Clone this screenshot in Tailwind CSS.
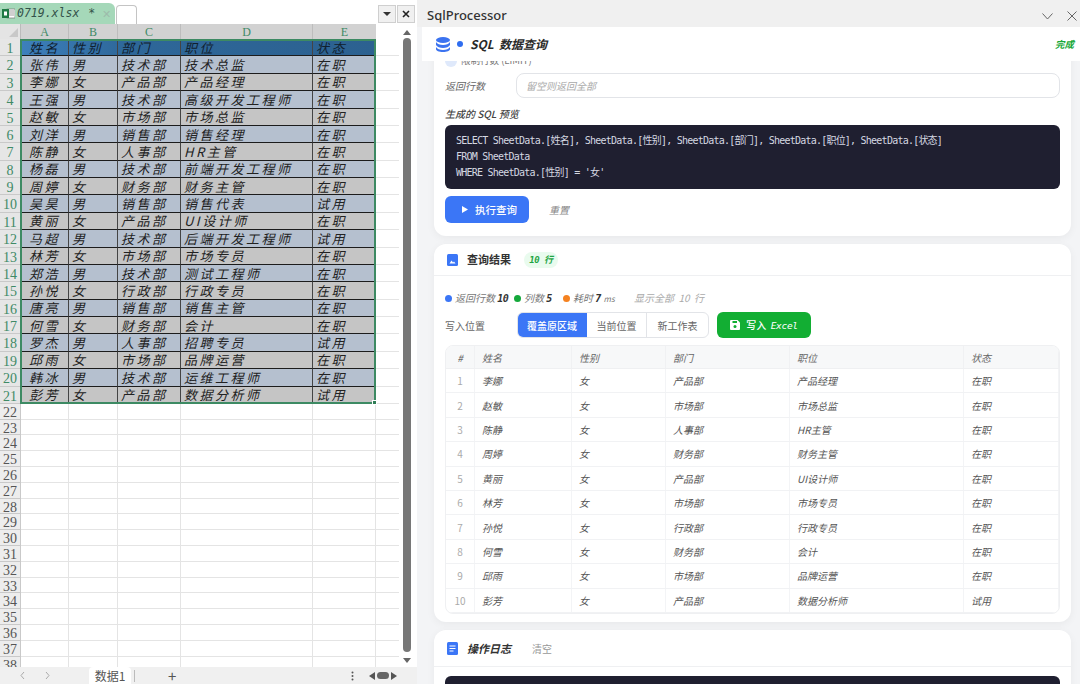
<!DOCTYPE html>
<html lang="zh-CN">
<head>
  <meta charset="UTF-8" />
  <title>0719.xlsx - SqlProcessor</title>
  <script src="https://cdn.jsdelivr.net/npm/@tailwindcss/browser@4"></script>
</head>
<body class="w-[1080px] h-[684px] overflow-hidden flex bg-white text-gray-800 font-['Noto_Sans_CJK_SC','Noto_Sans',sans-serif]">

<!-- Spreadsheet -->
<section class="w-[417px] h-full flex flex-col shrink-0 bg-white">
  <!-- File tabs -->
  <div class="h-6 flex items-end relative shrink-0">
    <div class="w-[115px] h-[21px] bg-[#a5d8b9] rounded-tr-md flex items-center pl-[2px]">
      <svg class="w-[13px] h-[13px] shrink-0" viewBox="0 0 13 13"><rect x="5" y="2" width="8" height="9" fill="#fff" stroke="#777" stroke-width=".7"/><path d="M7 4h5M7 6h5M7 8h5" stroke="#777" stroke-width=".7"/><rect x="0" y="2" width="7" height="9" fill="#1f7a45"/><rect x="2" y="4.500" width="3" height="4" fill="#fff"/></svg>
      <span class="ml-[2px] font-['DejaVu_Sans_Mono',monospace] italic text-[11.500px] text-[#33524a]">0719.xlsx</span>
      <span class="ml-[9px] font-['DejaVu_Sans_Mono',monospace] text-[11.500px] text-[#33524a]">*</span>
      <span class="text-[#9dbbab] text-[11px] ml-[7px]">✕</span>
    </div>
    <div class="w-[21px] h-[19px] ml-[1px] bg-white border border-b-0 border-[#c4c4c4] rounded-t-[4px]"></div>
    <div class="absolute right-[2px] top-[5px] flex gap-[1px]">
      <div class="w-[18px] h-[18px] bg-[#f0f0f0] border border-[#cfcfcf] flex items-center justify-center">
        <svg class="w-2 h-1" viewBox="0 0 8 4"><path d="M0 0h8L4 4z" fill="#333"/></svg>
      </div>
      <div class="w-[18px] h-[18px] bg-[#f0f0f0] border border-[#cfcfcf] flex items-center justify-center">
        <svg class="w-2 h-2" viewBox="0 0 8 8"><path d="M1 1l6 6M7 1L1 7" stroke="#222" stroke-width="1.6"/></svg>
      </div>
    </div>
  </div>

  <div class="flex-1 flex min-h-0">
    <div class="w-[399px] relative overflow-hidden">
      <!-- Column letters -->
      <div class="h-[15px] flex bg-[#f1f1f1] font-['Liberation_Serif',serif] text-[12px] leading-[16px] text-[#3f8a66] text-center">
        <div class="w-[21px] bg-[#e4e4e4] border-r border-[#bbb] relative">
          <svg class="absolute right-[2px] bottom-[2px] w-[9px] h-[9px]" viewBox="0 0 9 9"><path d="M9 0v9H0z" fill="#c8c8c8"/></svg>
        </div>
        <div class="w-[48px] bg-[#d2d2d2] border-r border-[#bdbdbd]">A</div>
        <div class="w-[49px] bg-[#d2d2d2] border-r border-[#bdbdbd]">B</div>
        <div class="w-[63px] bg-[#d2d2d2] border-r border-[#bdbdbd]">C</div>
        <div class="w-[132px] bg-[#d2d2d2] border-r border-[#bdbdbd]">D</div>
        <div class="w-[63px] bg-[#d2d2d2]">E</div>
        <div class="flex-1 bg-white"></div>
      </div>
      <div id="sheet"></div>
      <!-- Selection frame -->
      <div class="absolute left-[20px] top-[15px] w-[356px] h-[365px] border-2 border-[#3d8a63] pointer-events-none">
        <div class="absolute -right-[3px] -bottom-[3px] w-[3px] h-[3px] bg-[#2f7d55] border border-white box-content"></div>
      </div>
    </div>
    <!-- Vertical scrollbar -->
    <div class="w-[18px] flex flex-col items-center relative">
      <svg class="w-2 h-[5px] mt-[6px] ml-[-2px]" viewBox="0 0 8 5"><path d="M4 0l4 5H0z" fill="#666"/></svg>
      <div class="w-2 h-[614px] mt-[3px] ml-[-2px] bg-[#777] rounded-full"></div>
      <svg class="w-2 h-[5px] mt-[6px] ml-[-2px]" viewBox="0 0 8 5"><path d="M0 0h8L4 5z" fill="#666"/></svg>
    </div>
  </div>

  <!-- Sheet tabs -->
  <div class="h-[17px] shrink-0 flex items-center bg-[#f0f0f0] text-[#888] relative">
    <svg class="w-[7px] h-[9px] ml-[19px]" viewBox="0 0 7 9"><path d="M5 1L2 4.500l3 3.500" fill="none" stroke="#aaa"/></svg>
    <svg class="w-[7px] h-[9px] ml-[18px]" viewBox="0 0 7 9"><path d="M2 1l3 3.500L2 8" fill="none" stroke="#aaa"/></svg>
    <div class="w-[42px] h-full ml-[38px] bg-white rounded-t-[4px] text-[12px] leading-[17px] text-[#555] text-center">数据1</div>
    <div class="w-px h-[12px] ml-[3px] bg-[#bbb]"></div>
    <span class="ml-[33px] text-[15px] leading-[15px] text-[#555]">+</span>
    <div class="absolute right-[2px] top-0 h-full flex items-center">
      <svg class="w-[3px] h-[10px] mr-[15px]" viewBox="0 0 3 10"><circle cx="1.500" cy="1.500" r="1" fill="#555"/><circle cx="1.500" cy="5" r="1" fill="#555"/><circle cx="1.500" cy="8.500" r="1" fill="#555"/></svg>
      <svg class="w-[6px] h-2" viewBox="0 0 6 8"><path d="M6 0v8L0 4z" fill="#555"/></svg>
      <div class="w-[12px] h-[7px] mx-[2px] rounded-full bg-[#666]"></div>
      <svg class="w-[6px] h-2 mr-[18px]" viewBox="0 0 6 8"><path d="M0 0v8l6-4z" fill="#555"/></svg>
    </div>
  </div>
</section>

<!-- SqlProcessor task pane -->
<section class="flex-1 h-full flex flex-col bg-[#f3f4f6] min-w-0">
  <div class="h-[27px] shrink-0 bg-[#f0f0f0] flex items-center justify-between pt-[5px] pl-[10px] pr-[3px]">
    <span class="text-[13px] font-medium text-[#333] font-['Noto_Sans',sans-serif]">SqlProcessor</span>
    <div class="flex items-center gap-[14px]">
      <svg class="w-[11px] h-[7px]" viewBox="0 0 11 7"><path d="M.5.500l5 5.500 5-5.500" fill="none" stroke="#666"/></svg>
      <svg class="w-[10px] h-[10px]" viewBox="0 0 10 10"><path d="M.5.500l9 9M9.500.500l-9 9" fill="none" stroke="#666"/></svg>
    </div>
  </div>

  <div class="h-[34px] shrink-0 ml-[5px] bg-white flex items-center pl-[14px] pr-[6px] relative z-10">
    <svg class="w-[14px] h-[15px]" viewBox="0 0 14 15"><ellipse cx="7" cy="3" rx="7" ry="3" fill="#3b73f0"/><path d="M0 5c1 2 4 3 7 3s6-1 7-3v3c-1 2-4 3-7 3S1 10 0 8z" fill="#3b73f0"/><path d="M0 10c1 2 4 3 7 3s6-1 7-3v2c0 2-3 3-7 3s-7-1-7-3z" fill="#3b73f0"/></svg>
    <span class="w-[6px] h-[6px] ml-[7px] rounded-full bg-[#2f6df0]"></span>
    <span class="ml-[7px] text-[12px] font-bold italic text-[#2a2a2a] whitespace-pre">SQL  数据查询</span>
    <span class="ml-auto text-[9.500px] font-bold italic text-[#18a838]">完成</span>
  </div>

  <div class="flex-1 min-h-0 overflow-hidden pl-[17px] pr-[9px]">
    <!-- Query card -->
    <div class="-mt-[8px] h-[183px] bg-white rounded-b-xl shadow-[0_2px_8px_rgba(0,0,0,0.05)] px-[11px] flex flex-col">
      <div class="h-[15px] flex items-center gap-[4px] shrink-0">
        <span class="w-[12px] h-[12px] rounded-full bg-[#dfe9fb]"></span>
        <span class="text-[9.500px] text-[#777]">限制行数 (LIMIT)</span>
      </div>
      <div class="flex items-center mt-[5px] shrink-0">
        <span class="w-[71px] text-[10px] italic text-[#666]">返回行数</span>
        <div class="flex-1 h-[25px] border border-[#e2e4e8] rounded-lg flex items-center px-[9px] text-[10px] italic text-[#aaa]">留空则返回全部</div>
      </div>
      <div class="mt-[9px] text-[10px] font-medium italic text-[#444] leading-[13px] whitespace-pre shrink-0">生成的 SQL 预览</div>
      <div class="mt-[5px] h-[64px] shrink-0 bg-[#1f1f30] rounded-md px-[11px] py-[8px] font-['DejaVu_Sans_Mono','Noto_Sans_CJK_SC',monospace] text-[10px] tracking-[-0.770px] leading-[16px] text-[#d5d8e2] whitespace-pre">SELECT SheetData.[姓名], SheetData.[性别], SheetData.[部门], SheetData.[职位], SheetData.[状态]
FROM SheetData
WHERE SheetData.[性别] = '女'</div>
      <div class="mt-[7px] flex items-center shrink-0">
        <div class="w-[84px] h-[27px] bg-[#3b76f6] rounded-md flex items-center pl-[17px] gap-[7px] text-white text-[10.500px] font-medium">
          <svg class="w-[6px] h-[7px]" viewBox="0 0 6 7"><path d="M0 0l6 3.500L0 7z" fill="#fff"/></svg>
          执行查询
        </div>
        <span class="ml-[20px] text-[10px] italic text-[#888]">重置</span>
      </div>
    </div>

    <!-- Results card -->
    <div class="mt-[8px] h-[378px] bg-white rounded-xl shadow-[0_2px_8px_rgba(0,0,0,0.05)] flex flex-col">
      <div class="h-[32px] shrink-0 border-b border-[#eff0f2] flex items-center px-[13px]">
        <svg class="w-[11px] h-[12px]" viewBox="0 0 11 12"><rect width="11" height="12" rx="1.500" fill="#3b76f6"/><path d="M2.500 9.500l2-3 1.500 2 1-1 1.500 2z" fill="#fff"/></svg>
        <span class="ml-[9px] text-[11px] font-bold text-[#333]">查询结果</span>
        <span class="ml-[13px] w-[34px] h-[16px] rounded-full bg-[#e9fbee] text-[#1fa544] text-[9px] font-bold italic leading-[16px] text-center font-['DejaVu_Sans_Mono','Noto_Sans_CJK_SC',monospace] tracking-[-0.500px]">10 行</span>
      </div>
      <div class="h-[36px] shrink-0 px-[11px] pt-[15px] flex items-start text-[10px] leading-[14px] italic text-[#777]">
        <span class="w-[7px] h-[7px] mt-[4px] rounded-full bg-[#3b76f6]"></span>
        <span class="ml-[3px] w-[59px]">返回行数 <b class="text-[#333] font-['DejaVu_Sans_Mono',monospace] tracking-[-0.500px]">10</b></span>
        <span class="w-[7px] h-[7px] mt-[4px] rounded-full bg-[#14a83b]"></span>
        <span class="ml-[3px] w-[39px]">列数 <b class="text-[#333] font-['DejaVu_Sans_Mono',monospace]">5</b></span>
        <span class="w-[7px] h-[7px] mt-[4px] rounded-full bg-[#f58220]"></span>
        <span class="ml-[3px] w-[61px]">耗时 <b class="text-[#333] font-['DejaVu_Sans_Mono',monospace]">7</b> <span class="text-[8px]">ms</span></span>
        <span class="text-[#aaa] whitespace-pre">显示全部  10  行</span>
      </div>
      <div class="h-[26px] shrink-0 px-[11px] flex items-center">
        <span class="w-[72px] text-[10px] text-[#666]">写入位置</span>
        <div class="h-[26px] w-[192px] flex border border-[#e2e4e8] rounded-md overflow-hidden text-[10px] text-[#666]">
          <div class="w-[70px] bg-[#3b76f6] text-white flex items-center justify-center font-medium -m-px mr-0">覆盖原区域</div>
          <div class="w-[60px] border-r border-[#e2e4e8] flex items-center justify-center">当前位置</div>
          <div class="flex-1 flex items-center justify-center">新工作表</div>
        </div>
        <div class="ml-[8px] w-[94px] h-[26px] bg-[#12ae33] rounded-md flex items-center justify-center gap-[6px] text-white text-[10px] font-medium">
          <svg class="w-[10px] h-[10px]" viewBox="0 0 10 10"><path d="M1 0h6.500L10 2.500V9a1 1 0 0 1-1 1H1a1 1 0 0 1-1-1V1a1 1 0 0 1 1-1z" fill="#fff"/><rect x="2.500" y="1" width="4.500" height="2" fill="#12ae33"/><circle cx="5" cy="6.500" r="1.500" fill="#12ae33"/></svg>
          <span class="whitespace-pre">写入  <i class="font-['DejaVu_Sans_Mono',monospace] text-[9.500px] tracking-[-0.300px]">Excel</i></span>
        </div>
      </div>
      <div id="result" class="mx-[11px] mt-[7px] h-[269px] border border-[#eff0f2] rounded-lg overflow-hidden text-[10px] text-[#555]"></div>
    </div>

    <!-- Log card -->
    <div class="mt-[8px] h-[100px] bg-white rounded-t-xl shadow-[0_2px_8px_rgba(0,0,0,0.05)] flex flex-col">
      <div class="h-[37px] shrink-0 border-b border-[#eff0f2] flex items-center px-[13px]">
        <svg class="w-[11px] h-[13px]" viewBox="0 0 11 13"><rect width="11" height="13" rx="1.500" fill="#3b76f6"/><path d="M2.500 4h6M2.500 6.500h6M2.500 9h4" stroke="#fff"/></svg>
        <span class="ml-[9px] text-[11px] font-bold italic text-[#333]">操作日志</span>
        <span class="ml-[21px] text-[10px] text-[#999]">清空</span>
      </div>
      <div class="mx-[11px] mt-[9px] flex-1 bg-[#1f1f30] rounded-t-md"></div>
    </div>
  </div>
</section>

<script>
  const people = [
    ['姓名','性别','部门','职位','状态'],
    ['张伟','男','技术部','技术总监','在职'],
    ['李娜','女','产品部','产品经理','在职'],
    ['王强','男','技术部','高级开发工程师','在职'],
    ['赵敏','女','市场部','市场总监','在职'],
    ['刘洋','男','销售部','销售经理','在职'],
    ['陈静','女','人事部','HR主管','在职'],
    ['杨磊','男','技术部','前端开发工程师','在职'],
    ['周婷','女','财务部','财务主管','在职'],
    ['吴昊','男','销售部','销售代表','试用'],
    ['黄丽','女','产品部','UI设计师','在职'],
    ['马超','男','技术部','后端开发工程师','试用'],
    ['林芳','女','市场部','市场专员','在职'],
    ['郑浩','男','技术部','测试工程师','在职'],
    ['孙悦','女','行政部','行政专员','在职'],
    ['唐亮','男','销售部','销售主管','在职'],
    ['何雪','女','财务部','会计','在职'],
    ['罗杰','男','人事部','招聘专员','试用'],
    ['邱雨','女','市场部','品牌运营','在职'],
    ['韩冰','男','技术部','运维工程师','在职'],
    ['彭芳','女','产品部','数据分析师','试用'],
  ];
  const colWidths = ['w-[48px]','w-[49px]','w-[63px]','w-[132px]','w-[63px]'];

  // filled rows of the sheet
  let sheetHtml = '';
  people.forEach((row, i) => {
    const fill = i === 0 ? 'bg-linear-to-r from-[#3d80bc] via-[#2e6799] via-30% to-[#2c6190] text-[#10202e]' : i % 2 ? 'bg-[#b5c0cf] text-[#222]' : 'bg-[#c5c5c5] text-[#222]';
    const cells = row.map((text, c) => {
      const align = c === 0 ? 'justify-center' : 'pl-[3px]';
      return `<div class="${colWidths[c]} h-full border-r border-[#444] border-b-[1.5px] border-b-[#1c1c1c] flex items-center ${align} italic text-[13px] leading-none tracking-[2.500px] whitespace-nowrap">${text}</div>`;
    }).join('');
    sheetHtml += `<div class="h-[17.380px] flex"><div class="w-[21px] h-full bg-[#e6e6e6] border-r border-b border-[#c9c9c9] font-['Liberation_Serif',serif] text-[14px] leading-[19px] text-[#3f8a66] text-center">${i + 1}</div><div class="flex ${fill}">${cells}</div><div class="flex-1 border-b border-[#e4e4e4]"></div></div>`;
  });

  // empty rows below the data
  for (let n = 22; n <= 38; n++) {
    const cells = colWidths.map(w => `<div class="${w} h-full border-r border-b border-[#e4e4e4]"></div>`).join('');
    sheetHtml += `<div class="h-[15.800px] flex"><div class="w-[21px] h-full bg-[#ededed] border-r border-b border-[#c9c9c9] font-['Liberation_Serif',serif] text-[14px] leading-[17px] text-[#555] text-center">${n}</div>${cells}<div class="flex-1 border-b border-[#e4e4e4]"></div></div>`;
  }
  document.getElementById('sheet').innerHTML = sheetHtml;

  // query result table
  const resultCols = ['w-[29px] justify-center','w-[97px] pl-[7px]','w-[94px] pl-[7px]','w-[124px] pl-[7px]','w-[174px] pl-[7px]','flex-1 pl-[7px]'];
  const females = people.slice(1).filter(r => r[1] === '女');
  let resultHtml = `<div class="h-[23px] flex bg-[#f7f8f9] border-b border-[#eff0f2] italic text-[#666]">` +
    ['#', ...people[0]].map((t, c) => `<div class="${resultCols[c]} h-full border-r border-[#f0f1f3] flex items-center">${t}</div>`).join('') + `</div>`;
  females.forEach((row, i) => {
    resultHtml += `<div class="h-[24.400px] flex border-b border-[#f1f2f4]">` +
      [i + 1, ...row].map((t, c) => `<div class="${resultCols[c]} h-full border-r border-[#f3f4f6] flex items-center ${c === 0 ? 'text-[#aaa]' : 'italic'}">${t}</div>`).join('') + `</div>`;
  });
  document.getElementById('result').innerHTML = resultHtml;
</script>
</body>
</html>
